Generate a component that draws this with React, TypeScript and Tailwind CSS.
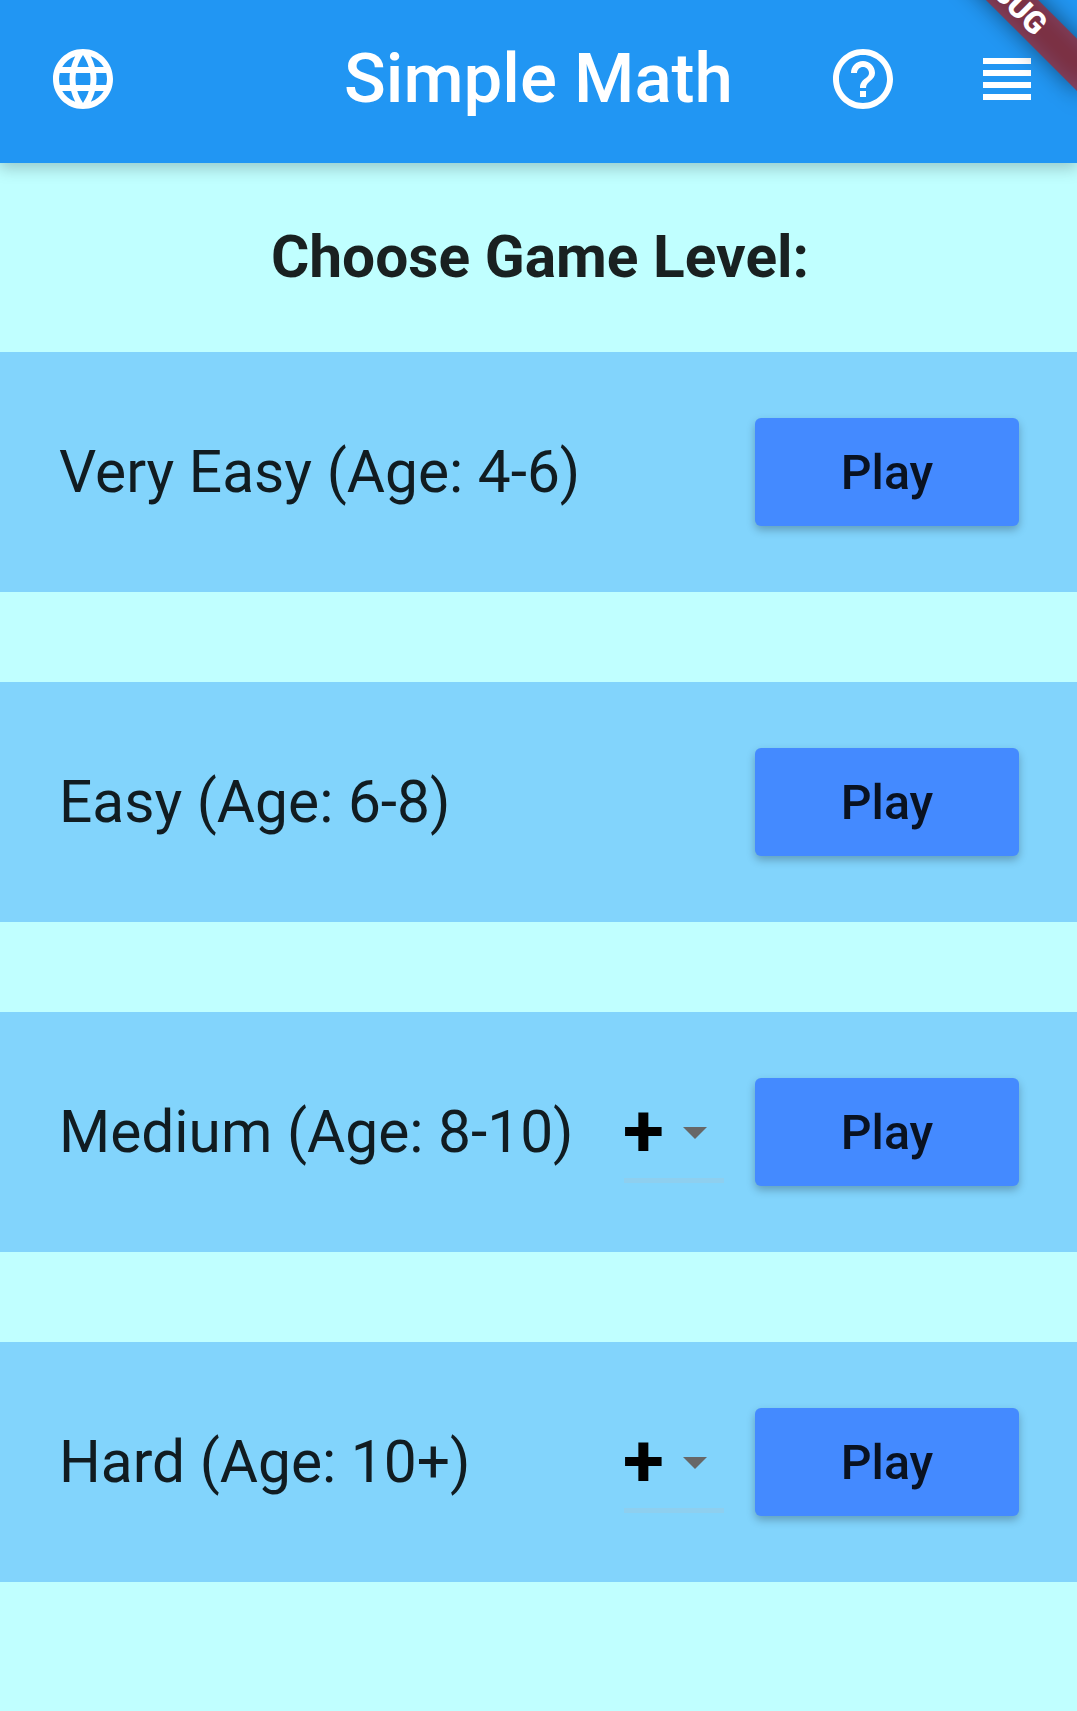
import React from "react";

type Level = { label: string; operator?: string };

const levels: Level[] = [
  { label: "Very Easy (Age: 4-6)" },
  { label: "Easy (Age: 6-8)" },
  { label: "Medium (Age: 8-10)", operator: "+" },
  { label: "Hard (Age: 10+)", operator: "+" },
];

function Icon({ d }: { d: string }) {
  return (
    <svg viewBox="0 0 24 24" className="size-[72px] shrink-0 fill-white" aria-hidden="true">
      <path d={d} />
    </svg>
  );
}

const globe =
  "M11.99 2C6.47 2 2 6.48 2 12s4.47 10 9.99 10C17.52 22 22 17.52 22 12S17.52 2 11.99 2zm6.93 6h-2.95c-.32-1.25-.78-2.45-1.38-3.56 1.84.63 3.37 1.91 4.33 3.56zM12 4.04c.83 1.2 1.48 2.53 1.91 3.96h-3.82c.43-1.43 1.08-2.76 1.91-3.96zM4.26 14C4.1 13.36 4 12.69 4 12s.1-1.36.26-2h3.38c-.08.66-.14 1.32-.14 2s.06 1.34.14 2H4.26zm.82 2h2.95c.32 1.25.78 2.45 1.38 3.56-1.84-.63-3.37-1.9-4.33-3.56zm2.95-8H5.08c.96-1.66 2.49-2.93 4.33-3.56C8.81 5.55 8.35 6.75 8.03 8zM12 19.96c-.83-1.2-1.48-2.53-1.91-3.96h3.82c-.43 1.43-1.08 2.76-1.91 3.96zM14.34 14H9.66c-.09-.66-.16-1.32-.16-2s.07-1.35.16-2h4.68c.09.65.16 1.32.16 2s-.07 1.34-.16 2zm.25 5.56c.6-1.11 1.06-2.31 1.38-3.56h2.95c-.96 1.65-2.49 2.93-4.33 3.56zM16.36 14c.08-.66.14-1.32.14-2s-.06-1.34-.14-2h3.38c.16.64.26 1.31.26 2s-.1 1.36-.26 2h-3.38z";
const help =
  "M11 18h2v-2h-2v2zm1-16C6.48 2 2 6.48 2 12s4.48 10 10 10 10-4.48 10-10S17.52 2 12 2zm0 18c-4.41 0-8-3.59-8-8s3.59-8 8-8 8 3.59 8 8-3.59 8-8 8zm0-14c-2.21 0-4 1.79-4 4h2c0-1.1.9-2 2-2s2 .9 2 2c0 2-3 1.75-3 5h2c0-2.25 3-2.5 3-5 0-2.21-1.79-4-4-4z";
const headline = "M4 15h16v-2H4v2zm0 4h16v-2H4v2zm0-8h16V9H4v2zm0-6v2h16V5H4z";

function OperatorSelect({ value }: { value: string }) {
  return (
    <button className="mr-[31px] flex h-[102px] w-[100px] items-center border-b-[5px] border-[#bdbdbd]/20">
      <span className="-ml-px w-[44px] text-left text-[75px] leading-[90px] font-bold text-black">{value}</span>
      <svg viewBox="0 0 10 5" className="mt-[7px] ml-[16px] h-[12px] w-[24px] shrink-0 fill-[#676767]" aria-hidden="true">
        <path d="M0 0l5 5 5-5z" />
      </svg>
    </button>
  );
}

function LevelRow({ level }: { level: Level }) {
  return (
    <li className="flex h-[240px] items-center bg-[#82d4fc] pr-[58px] pl-[59px]">
      <span className="flex-1 text-[58.65px] leading-[70px] whitespace-nowrap text-black/87">{level.label}</span>
      {level.operator && <OperatorSelect value={level.operator} />}
      <button className="h-[108px] w-[264px] rounded-[6px] bg-[#448aff] pt-[2px] text-[48.3px] leading-[56px] font-medium text-black/87 shadow-[0_4px_8px_rgba(0,0,0,0.25)]">
        Play
      </button>
    </li>
  );
}

function DebugBanner() {
  return (
    <div className="pointer-events-none absolute top-[-78px] right-[-2px] size-0 rotate-45">
      <div className="absolute top-[84px] left-[-120px] h-[36px] w-[240px] bg-black/50 blur-[12px]" />
      <div className="absolute top-[84px] left-[-120px] h-[37px] w-[240px] bg-[#b71c1c]/63 text-center text-[31px] leading-[37px] font-black text-white">
        DEBUG
      </div>
    </div>
  );
}

export default function App() {
  return (
    <div className="relative h-[1711px] w-[1077px] overflow-hidden bg-[#c0ffff] font-['Roboto',sans-serif]">
      <header className="relative grid h-[163px] grid-cols-[1fr_auto_1fr] items-start bg-[#2196f3] pt-[43px] pr-[34px] pl-[47px] shadow-[0_4px_15px_1px_rgba(0,0,0,0.22)]">
        <Icon d={globe} />
        <h1 className="-ml-[13px] text-[69px] leading-[72px] font-medium whitespace-nowrap text-white">
          Simple Math
        </h1>
        <div className="flex justify-end gap-[72px]">
          <Icon d={help} />
          <Icon d={headline} />
        </div>
      </header>
      <main>
        <h2 className="flex h-[189px] items-center justify-center pl-[3px] text-[58.65px] font-bold text-black/87">
          Choose Game Level:
        </h2>
        <ul className="flex flex-col gap-[90px]">
          {levels.map((level) => (
            <LevelRow key={level.label} level={level} />
          ))}
        </ul>
      </main>
      <DebugBanner />
    </div>
  );
}
